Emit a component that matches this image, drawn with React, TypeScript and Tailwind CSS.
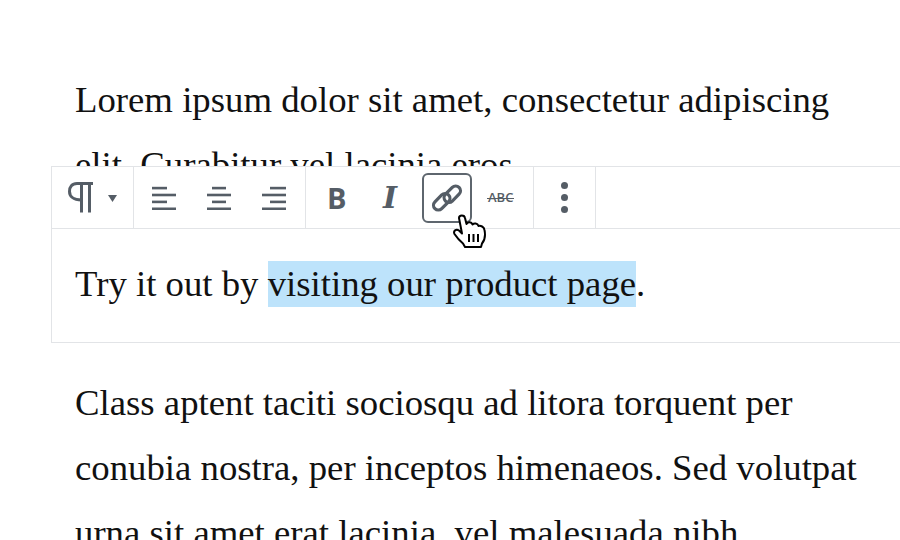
const ink = "#555d66";

function AlignIcon({ rows }: { rows: [number, number][] }) {
  return (
    <svg width="24" height="24" viewBox="0 0 24 24" fill={ink} className="block">
      {rows.map(([x, w], i) => (
        <rect key={i} x={x} y={0.8 + i * 6.9} width={w} height={2.6} />
      ))}
    </svg>
  );
}

function HandCursor() {
  return (
    <svg width="34" height="36" viewBox="0 0 34 36" className="absolute top-[214px] left-[453px]">
      <path
        d="M6 4C6 .5 11.5.5 12 4l1.5 6c1.5-2.5 5-2.5 6 .5 1.5-1.5 5-1.5 6 1.500 2-.5 5.500.5 6 4 1 5 .5 10-2.500 13.500L28 33H12l-2-3.500C7 27 3.500 23 1.500 20 0 17 3 14.500 6 16.500l3 3z"
        fill="#fff"
        stroke="#000"
        strokeWidth="2"
        strokeLinejoin="round"
      />
      <path d="M16 20v8M20.500 20v8M25 20v8" stroke="#000" strokeWidth="2" fill="none" />
    </svg>
  );
}

function Toolbar() {
  return (
    <div className="flex h-[61px] w-fit border-r border-[#e2e4e7] bg-white">
      <div className="flex w-[82px] items-center border-r border-[#e2e4e7] pl-[16px]">
        <svg width="26" height="31" viewBox="0 0 26 31" fill="none" stroke={ink} strokeWidth="3" className="block">
          <path d="M25 1.500H9C4 1.500 1.500 5 1.500 9.500S5 18 13.500 18" />
          <path d="M13.500 1.500V30.500M21.500 1.500V30.500" />
        </svg>
        <svg width="9" height="7" viewBox="0 0 9 7" fill={ink} className="mt-[1px] ml-[14px]">
          <path d="M0 0h9L4.500 7z" />
        </svg>
      </div>
      <div className="flex w-[172px] items-center gap-[31px] border-r border-[#e2e4e7] pl-[18px]">
        <AlignIcon rows={[[0, 15], [0, 24], [0, 15], [0, 24]]} />
        <AlignIcon rows={[[5, 14], [0, 24], [5, 14], [0, 24]]} />
        <AlignIcon rows={[[8, 16], [0, 24], [8, 16], [0, 24]]} />
      </div>
      <div className="flex w-[228px] items-center border-r border-[#e2e4e7] pl-[21px]">
        <span className="w-[20px] font-['Open_Sans',sans-serif] text-[29px] leading-none font-bold text-[#555d66]">B</span>
        <span className="ml-[36px] w-[22px] font-['DejaVu_Serif',serif] text-[30px] leading-none font-bold text-[#555d66] italic">I</span>
        <div className="ml-[17px] flex h-[50px] w-[50px] items-center justify-center rounded-[6px] border-2 border-[#5e666e]">
          <svg width="32" height="32" viewBox="0 0 30 30" fill="none" stroke={ink} strokeWidth="3">
            <g transform="rotate(-45 15 15)">
              <rect x="0" y="9.500" width="18" height="9" rx="4.500" />
              <rect x="12" y="11.500" width="18" height="9" rx="4.500" />
            </g>
          </svg>
        </div>
        <span className="relative ml-[16px] font-['Open_Sans',sans-serif] text-[13px] leading-none font-semibold text-[#555d66]">
          ABC
          <span className="absolute top-[7px] right-[-1px] left-[-1px] h-px bg-[#555d66]" />
        </span>
      </div>
      <div className="flex w-[61px] flex-col items-center justify-center gap-[5px]">
        <span className="h-[7px] w-[7px] rounded-full bg-[#555d66]" />
        <span className="h-[7px] w-[7px] rounded-full bg-[#555d66]" />
        <span className="h-[7px] w-[7px] rounded-full bg-[#555d66]" />
      </div>
    </div>
  );
}

export default function App() {
  return (
    <div className="relative h-[540px] w-[900px] overflow-hidden bg-white font-['Liberation_Serif',serif] text-[36.75px] leading-[65px] text-[#111]">
      <p className="mt-[67px] ml-[75px] w-[790px]">
        Lorem ipsum dolor sit amet, consectetur adipiscing elit. Curabitur vel lacinia eros.
      </p>

      <div className="relative mt-[-31px] ml-[51px] h-[177px] w-[900px] border border-[#e2e4e7] bg-white">
        <Toolbar />
        <div className="border-t border-[#e2e4e7] pt-[22px] pl-[23px] leading-[65px]">
          Try it out by <span className="bg-[#bde3fb] pt-[2px] pb-[3px]">visiting our product page</span>.
        </div>
      </div>

      <p className="mt-[27px] ml-[75px] w-[790px]">
        Class aptent taciti sociosqu ad litora torquent per conubia nostra, per inceptos himenaeos. Sed volutpat urna sit amet erat lacinia, vel malesuada nibh.
      </p>

      <HandCursor />
    </div>
  );
}
